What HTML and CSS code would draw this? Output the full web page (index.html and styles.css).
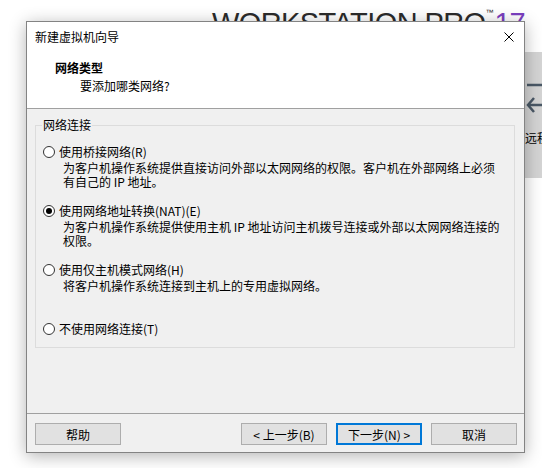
FILE: index.html
```html
<!DOCTYPE html>
<html lang="zh-CN">
<head>
    <meta charset="UTF-8">
    <title>新建虚拟机向导</title>
    <link rel="stylesheet" href="styles.css">
</head>
<body>
    <!-- 背景：主窗口 -->
    <div class="app">
        <div class="brand">WORKSTATION PRO<sup class="tm">™</sup><span class="ver">17</span></div>
        <div class="side">
            <div class="side-panel">
                <svg class="side-icon" width="20" height="62" viewBox="0 0 20 62">
                    <line x1="3" y1="33" x2="20" y2="33" stroke="#4a5866" stroke-width="2.5"/>
                    <polyline points="10,46 4,53 10,60" fill="none" stroke="#4a5866" stroke-width="2.5"/>
                    <line x1="4" y1="53" x2="20" y2="53" stroke="#4a5866" stroke-width="2.5"/>
                </svg>
                <div class="side-label">远程</div>
            </div>
        </div>
    </div>

    <!-- 向导对话框 -->
    <div class="dialog">
        <div class="titlebar">
            <span class="titlebar-text">新建虚拟机向导</span>
            <button class="close-btn">
                <svg width="10" height="10" viewBox="0 0 10 10">
                    <path d="M0.5 0.5 L9.5 9.5 M9.5 0.5 L0.5 9.5" stroke="#000" stroke-width="1"/>
                </svg>
            </button>
        </div>

        <div class="header">
            <div class="header-title">网络类型</div>
            <div class="header-sub">要添加哪类网络?</div>
        </div>

        <div class="body">
            <fieldset class="group">
                <legend class="group-label">网络连接</legend>

                <div class="option">
                    <div class="option-label"><span class="radio"></span>使用桥接网络(R)</div>
                    <div class="option-desc">为客户机操作系统提供直接访问外部以太网网络的权限。客户机在外部网络上必须<br>有自己的 IP 地址。</div>
                </div>

                <div class="option">
                    <div class="option-label"><span class="radio checked"></span>使用网络地址转换(NAT)(E)</div>
                    <div class="option-desc">为客户机操作系统提供使用主机 IP 地址访问主机拨号连接或外部以太网网络连接的<br>权限。</div>
                </div>

                <div class="option">
                    <div class="option-label"><span class="radio"></span>使用仅主机模式网络(H)</div>
                    <div class="option-desc">将客户机操作系统连接到主机上的专用虚拟网络。</div>
                </div>

                <div class="option last">
                    <div class="option-label"><span class="radio"></span>不使用网络连接(T)</div>
                </div>
            </fieldset>
        </div>

        <div class="footer">
            <button class="btn">帮助</button>
            <button class="btn push">&lt; 上一步(B)</button>
            <button class="btn default">下一步(N) &gt;</button>
            <button class="btn">取消</button>
        </div>
    </div>
</body>
</html>
```

FILE: styles.css
```css
* {
    margin: 0;
    padding: 0;
    box-sizing: border-box;
}

body {
    width: 542px;
    height: 468px;
    overflow: hidden;
    position: relative;
    background: #fff;
    font-family: 'Microsoft YaHei UI', 'Noto Sans CJK SC', sans-serif;
    font-size: 12px;
    color: #000;
}

/* 背景主窗口 */
.brand {
    height: 52px;
    padding: 9px 0 0 212px;
    font-family: 'Liberation Sans', sans-serif;
    font-size: 29px;
    line-height: 29px;
    color: #2b2b2b;
    white-space: nowrap;
    letter-spacing: -0.6px;
}

.tm {
    font-size: 8px;
    vertical-align: top;
    line-height: 8px;
    letter-spacing: 0;
}

.ver {
    color: #7a3fbf;
    margin-left: 1px;
    letter-spacing: -1px;
}

.side {
    padding-left: 524px;
}

.side-panel {
    height: 126px;
    background: #d4d4d4;
    overflow: hidden;
    white-space: nowrap;
}

.side-icon {
    display: block;
}

.side-label {
    margin-top: 16px;
    padding-left: 1px;
    line-height: 16px;
    font-size: 12px;
    color: #000;
}

/* 对话框 */
.dialog {
    position: absolute;
    left: 26px;
    top: 21px;
    width: 499px;
    height: 432px;
    border: 1px solid #838383;
    background: #f0f0f0;
    box-shadow: 0 3px 16px rgba(0,0,0,0.3);
    display: flex;
    flex-direction: column;
}

.titlebar {
    height: 30px;
    background: #fff;
    display: flex;
    align-items: center;
    justify-content: space-between;
    padding-left: 8px;
}

.titlebar-text {
    line-height: 16px;
}

.close-btn {
    width: 30px;
    height: 30px;
    border: none;
    background: transparent;
    display: flex;
    align-items: center;
    justify-content: center;
}

.header {
    height: 57px;
    background: #fff;
    border-bottom: 1px solid #a0a0a0;
    padding: 8px 0 0 28px;
    line-height: 16px;
}

.header-title {
    font-weight: bold;
}

.header-sub {
    margin-top: 2px;
    padding-left: 25px;
}

.body {
    flex: 1;
    padding: 9px 9px 0 8px;
}

.group {
    border: 1px solid #dcdcdc;
    padding: 12px 6px 11px 6px;
    line-height: 14px;
}

.group-label {
    padding: 0 1px;
    line-height: 14px;
}

.option {
    margin-bottom: 14px;
}

.option.last {
    margin-bottom: 0;
}

.option-label {
    display: flex;
    align-items: center;
    gap: 4px;
    line-height: 14px;
    padding-top: 1px;
}

.radio {
    width: 12px;
    height: 12px;
    margin-left: 1px;
    border: 1px solid #333;
    border-radius: 50%;
    background: #fff;
    display: flex;
    align-items: center;
    justify-content: center;
}

.radio.checked::after {
    content: '';
    width: 6px;
    height: 6px;
    border-radius: 50%;
    background: #000;
}

.option-desc {
    margin: 2px 0 0 21px;
    min-height: 28px;
    white-space: nowrap;
}

/* 底部按钮 */
.footer {
    border-top: 1px solid #a0a0a0;
    padding: 9px 7px 7px 8px;
    display: flex;
    gap: 9px;
}

.btn {
    width: 86px;
    height: 22px;
    background: #e1e1e1;
    border: 1px solid #adadad;
    font-family: inherit;
    font-size: 12px;
    color: #000;
}

.btn.push {
    margin-left: auto;
}

.btn.default {
    border: 2px solid #0078d7;
}
```
